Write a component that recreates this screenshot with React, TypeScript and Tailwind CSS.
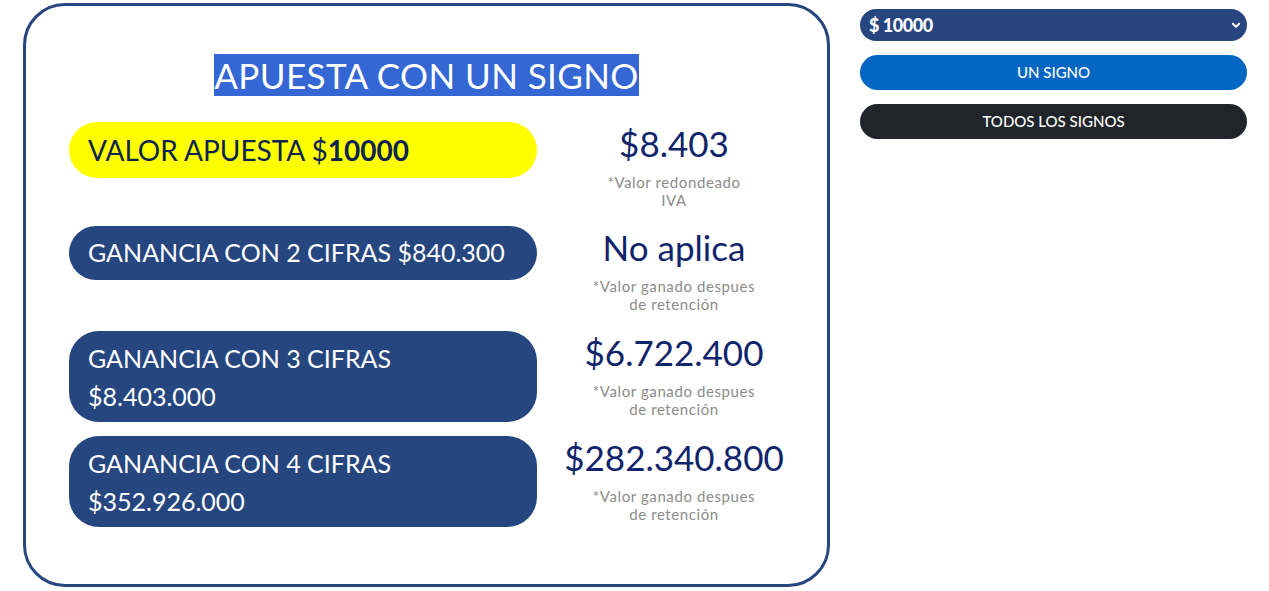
import React from "react";

const rows = [
  { label: "GANANCIA CON 2 CIFRAS $840.300", value: "No aplica", tall: false },
  { label: "GANANCIA CON 3 CIFRAS $8.403.000", value: "$6.722.400", tall: true },
  { label: "GANANCIA CON 4 CIFRAS $352.926.000", value: "$282.340.800", tall: true },
];

function Valor({ value, note1, note2 }: { value: string; note1: string; note2: string }) {
  return (
    <div className="w-[230px] text-center">
      <div className="text-[35px] leading-[42px] text-[#0f246a]">{value}</div>
      <div className="mt-[9px] text-[15px] leading-[18px] tracking-[0.6px] text-[#8c8c8c]">
        <div>{note1}</div>
        <div>{note2}</div>
      </div>
    </div>
  );
}

export default function App() {
  return (
    <div className="flex items-start gap-[30px] bg-white pl-[23px] pt-[3px] font-['Lato',sans-serif] min-h-[591px]">
      <section className="w-[807px] h-[584px] rounded-[42px] border-[3px] border-[#27457e]">
        <h2 className="mt-[49px] text-center text-[35px] leading-[40px] tracking-[0.4px] text-white">
          <span className="bg-[#3467d3]">APUESTA CON UN SIGNO</span>
        </h2>

        <div className="mt-[27px] pl-[43px] flex flex-col">
          <div className="flex items-start gap-[22px] h-[104px]">
            <div className="w-[468px] h-[56px] rounded-full bg-[#ffff00] pl-[19px] flex items-center text-[28px] text-[#0d2350]">
              VALOR APUESTA $<b className="font-bold">10000</b>
            </div>
            <Valor value="$8.403" note1="*Valor redondeado" note2="IVA" />
          </div>

          {rows.map((r) => (
            <div key={r.label} className="flex items-start gap-[22px] h-[105px]">
              <div
                className={
                  r.tall
                    ? "w-[468px] h-[91px] rounded-[30px] bg-[#26467f] pl-[19px] pr-[100px] py-[8px] text-[25px] leading-[38px] text-white"
                    : "w-[468px] h-[54px] rounded-full bg-[#26467f] pl-[19px] flex items-center text-[25px] text-white"
                }
              >
                {r.label}
              </div>
              <Valor value={r.value} note1="*Valor ganado despues" note2="de retención" />
            </div>
          ))}
        </div>
      </section>

      <aside className="w-[387px] mt-[6px] flex flex-col gap-[14px]">
        <div className="h-[32px] rounded-full bg-[#27467f] pl-[9px] pr-[6px] flex items-center justify-between text-white">
          <span className="text-[18px] font-black tracking-tight">$ 10000</span>
          <svg width="10" height="10" viewBox="0 0 16 16" fill="none" stroke="white" strokeWidth="3" strokeLinecap="round" strokeLinejoin="round">
            <path d="M3 6l5 5 5-5" />
          </svg>
        </div>
        <button className="h-[35px] rounded-full bg-[#0366c2] text-white text-[15px] font-medium">UN SIGNO</button>
        <button className="h-[35px] rounded-full bg-[#212529] text-white text-[15px] font-medium">TODOS LOS SIGNOS</button>
      </aside>
    </div>
  );
}
